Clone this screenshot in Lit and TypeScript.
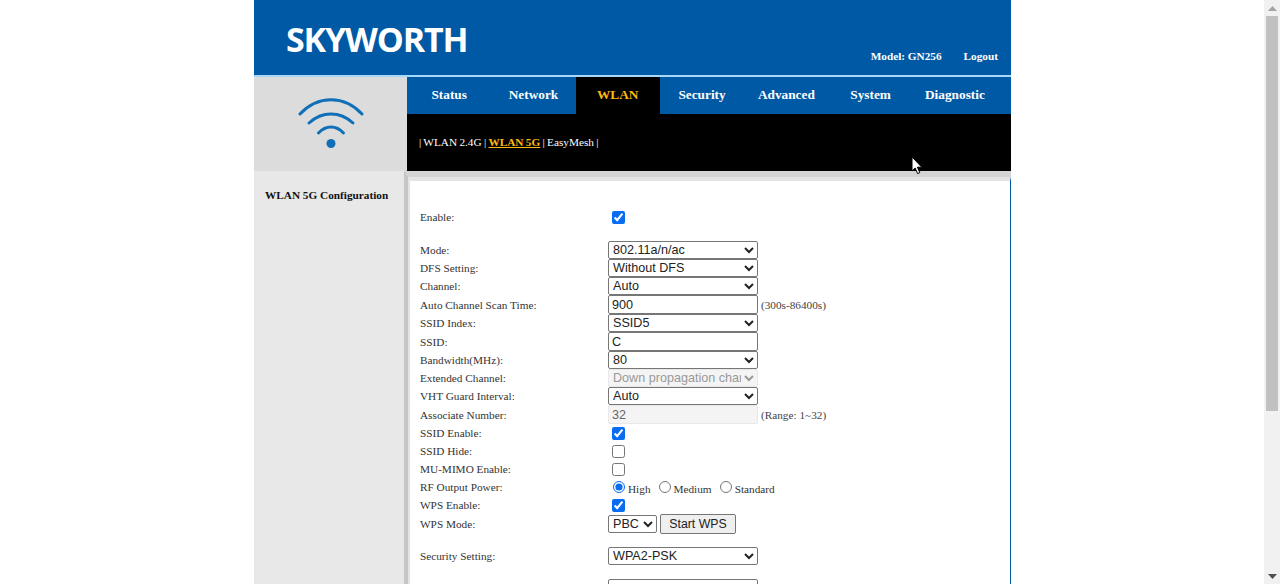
import { LitElement, css, html } from 'lit';
import { customElement } from 'lit/decorators.js';

const TABS = ['Status', 'Network', 'WLAN', 'Security', 'Advanced', 'System', 'Diagnostic'];

@customElement('app-root')
export class AppRoot extends LitElement {
  static styles = css`
    :host {
      display: flex;
      height: 584px;
      overflow: hidden;
      background: #fff;
      font-family: 'Liberation Serif', 'Times New Roman', serif;
      font-size: 11.25px;
      color: #222;
      position: relative;
    }

    .viewport {
      flex: 1;
      display: flex;
      justify-content: center;
      padding-left: 1px;
    }

    .page {
      width: 757px;
      flex: none;
    }

    .header {
      height: 75px;
      background: #0059a4;
      border-bottom: 2px solid #a8d8f8;
      display: flex;
      justify-content: space-between;
      color: #fff;
    }

    .logo {
      margin: 20px 0 0 32px;
      font: bold 34px/38px 'Open Sans', 'Liberation Sans', sans-serif;
      letter-spacing: -1.15px;
    }

    .header-links {
      display: flex;
      gap: 22px;
      margin: 49px 13px 0 0;
      font-weight: bold;
      line-height: 14px;
    }

    .top {
      display: flex;
      height: 94px;
    }

    .wifi {
      width: 153px;
      background: #dcdcdc;
      display: flex;
      justify-content: center;
      padding-top: 21px;
      box-sizing: border-box;
    }

    .nav {
      flex: 1;
      background: #000;
    }

    .tabs {
      display: flex;
      height: 37px;
      background: #0059a4;
    }

    .tab {
      width: 84.3px;
      text-align: center;
      color: #fff;
      font: bold 13.3px/36px 'Liberation Serif', serif;
    }

    .tab.on {
      background: #000;
      color: #fdb913;
    }

    .subnav {
      color: #fff;
      padding: 21px 0 0 12px;
      line-height: 14px;
      white-space: pre;
      word-spacing: -0.5px;
    }

    .subnav .on {
      color: #fdb913;
      font-weight: bold;
      text-decoration: underline;
    }

    .body {
      display: flex;
      height: 413px;
    }

    .side {
      width: 150px;
      background: #e8e8e8;
      padding: 17px 0 0 11px;
      box-sizing: border-box;
      font-weight: bold;
      color: #111;
      line-height: 14px;
    }

    .frame {
      flex: 1;
      display: flex;
      border-left: 4px solid #c6c6c6;
      border-top: 6px solid #d4d4d4;
    }

    .panel {
      flex: 1;
      background: #fff;
      border-left: 2px solid #e4e4e4;
      border-top: 4px solid #e4e4e4;
      border-right: 1px solid #0059a4;
      padding: 27px 0 0 10px;
      overflow: hidden;
    }

    .row {
      display: flex;
      align-items: center;
      height: 18px;
      color: #333;
    }

    .row.tall {
      height: 19px;
    }

    .row.enable {
      margin-bottom: 15px;
    }

    .row.wps {
      height: 19px;
    }

    .row.gap {
      margin-top: 14px;
    }

    .row label {
      width: 188px;
      flex: none;
    }

    .hint {
      margin-left: 3px;
      color: #444;
    }

    select,
    input[type='text'] {
      box-sizing: border-box;
      width: 150px;
      height: 18px;
      margin: 0;
      font: 12.6px 'Liberation Sans', Arial, sans-serif;
      color: #222;
      background: #fff;
      border: 1px solid #767676;
      border-radius: 2px;
    }

    select {
      padding: 0;
    }

    input[type='text'] {
      height: 19px;
      padding: 0 3px;
    }

    select:disabled {
      color: #999;
      background: #f4f4f4;
      border-color: #e8e8e8;
      opacity: 1;
    }

    input[type='text']:disabled {
      color: #666;
      background: #f4f4f4;
      border-color: #e8e8e8;
    }

    input[type='checkbox'] {
      width: 13px;
      height: 13px;
      margin: 0 0 0 4px;
      accent-color: #0a6cf0;
    }

    input[type='radio'] {
      width: 12px;
      height: 12px;
      margin: 0 1px 0 5px;
      accent-color: #0a6cf0;
    }

    .radios {
      display: flex;
      align-items: center;
      gap: 2px;
    }

    .radios span {
      margin-top: 3px;
      margin-right: 1px;
    }

    .wps-mode {
      width: 49px;
    }

    .start {
      box-sizing: border-box;
      height: 20px;
      width: 76px;
      margin-left: 3px;
      padding: 0;
      font: 12.3px 'Liberation Sans', Arial, sans-serif;
      color: #222;
      background: #efefef;
      border: 1px solid #767676;
      border-radius: 2px;
    }

    .scrollbar {
      width: 16px;
      flex: none;
      background: #f1f1f1;
      display: flex;
      flex-direction: column;
      align-items: center;
      justify-content: space-between;
    }

    .thumb {
      flex: none;
      width: 12px;
      height: 395px;
      background: #c1c1c1;
    }

    .arrow {
      height: 16px;
      display: flex;
      align-items: center;
      justify-content: center;
      flex: none;
    }

    .bar-top {
      display: flex;
      flex-direction: column;
      align-items: center;
    }

    .cursor {
      position: absolute;
      left: 911px;
      top: 156px;
    }
  `;

  render() {
    return html`
      <div class="viewport">
        <div class="page">
          <div class="header">
            <div class="logo">SKYWORTH</div>
            <div class="header-links"><span>Model: GN256</span><span>Logout</span></div>
          </div>
          <div class="top">
            <div class="wifi">
              <svg width="66" height="52" viewBox="0 0 66 52" fill="none" stroke="#0f70b8" stroke-width="3" stroke-linecap="round">
                <path d="M2 16 C20 -3 46 -3 64 16" />
                <path d="M11 25 C24 13 42 13 55 25" />
                <path d="M20.500 35 C28 27 38 27 45.500 35" />
                <circle cx="33" cy="45.500" r="4.500" fill="#0f70b8" stroke="none" />
              </svg>
            </div>
            <div class="nav">
              <div class="tabs">
                ${TABS.map((t) => html`<div class="tab ${t === 'WLAN' ? 'on' : ''}">${t}</div>`)}
              </div>
              <div class="subnav">| WLAN 2.4G | <span class="on">WLAN 5G</span> | EasyMesh |</div>
            </div>
          </div>
          <div class="body">
            <div class="side">WLAN 5G Configuration</div>
            <div class="frame">
              <div class="panel">
                <div class="row enable"><label>Enable:</label><input type="checkbox" checked /></div>
                <div class="row"><label>Mode:</label><select><option>802.11a/n/ac</option></select></div>
                <div class="row"><label>DFS Setting:</label><select><option>Without DFS</option></select></div>
                <div class="row"><label>Channel:</label><select><option>Auto</option></select></div>
                <div class="row tall"><label>Auto Channel Scan Time:</label><input type="text" value="900" /><span class="hint">(300s-86400s)</span></div>
                <div class="row"><label>SSID Index:</label><select><option>SSID5</option></select></div>
                <div class="row tall"><label>SSID:</label><input type="text" value="C" /></div>
                <div class="row"><label>Bandwidth(MHz):</label><select><option>80</option></select></div>
                <div class="row"><label>Extended Channel:</label><select disabled><option>Down propagation channel</option></select></div>
                <div class="row"><label>VHT Guard Interval:</label><select><option>Auto</option></select></div>
                <div class="row tall"><label>Associate Number:</label><input type="text" value="32" disabled /><span class="hint">(Range: 1~32)</span></div>
                <div class="row"><label>SSID Enable:</label><input type="checkbox" checked /></div>
                <div class="row"><label>SSID Hide:</label><input type="checkbox" /></div>
                <div class="row"><label>MU-MIMO Enable:</label><input type="checkbox" /></div>
                <div class="row">
                  <label>RF Output Power:</label>
                  <div class="radios">
                    <input type="radio" name="rf" checked /><span>High</span>
                    <input type="radio" name="rf" /><span>Medium</span>
                    <input type="radio" name="rf" /><span>Standard</span>
                  </div>
                </div>
                <div class="row"><label>WPS Enable:</label><input type="checkbox" checked /></div>
                <div class="row wps"><label>WPS Mode:</label><select class="wps-mode"><option>PBC</option></select><button class="start">Start WPS</button></div>
                <div class="row gap"><label>Security Setting:</label><select><option>WPA2-PSK</option></select></div>
                <div class="row gap"><label></label><select></select></div>
              </div>
            </div>
          </div>
        </div>
      </div>
      <div class="scrollbar">
        <div class="bar-top">
          <div class="arrow"><svg width="9" height="5" viewBox="0 0 9 5"><path d="M4.500 0 L9 5 H0 Z" fill="#a3a3a3" /></svg></div>
          <div class="thumb"></div>
        </div>
        <div class="arrow"><svg width="9" height="5" viewBox="0 0 9 5"><path d="M0 0 H9 L4.500 5 Z" fill="#505050" /></svg></div>
      </div>
      <svg class="cursor" width="12" height="19" viewBox="0 0 12 19">
        <path d="M1 1 V15 L4.200 12 L6.600 17.600 L8.800 16.600 L6.400 11.200 H10.800 Z" fill="#fff" stroke="#000" stroke-width="1" />
      </svg>
    `;
  }
}
